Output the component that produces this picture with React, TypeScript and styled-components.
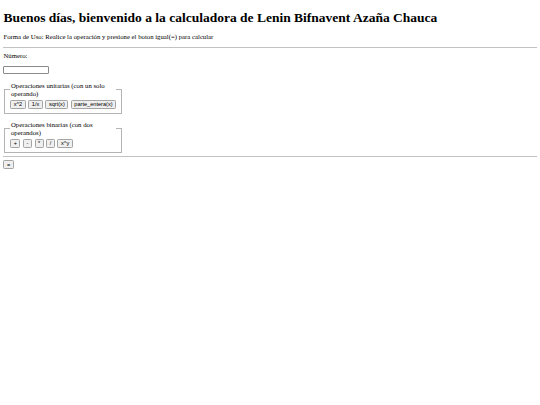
import styled, { createGlobalStyle } from "styled-components";

const GlobalStyle = createGlobalStyle`
  html, body {
    background: #ffffff;
  }
  body {
    margin: 3.4px;
    font-family: "Liberation Serif", "Times New Roman", serif;
    font-size: 6.75px;
    line-height: 1.15;
    color: #000000;
  }
`;

const Title = styled.h1`
  font-size: 13.5px;
  font-weight: bold;
  margin: 7px 0 7.5px;
`;

const Usage = styled.p`
  margin: 6px 0;
`;

const Rule = styled.hr`
  margin: 3.4px 0;
  border: none;
  border-top: 1px solid #c2c2c2;
  height: 0;
`;

const Label = styled.div`
  margin-top: 2.6px;
`;

const NumberInput = styled.input`
  display: block;
  box-sizing: border-box;
  width: 46px;
  height: 8px;
  padding: 0.4px 0.8px;
  margin: 6.5px 0 8px;
  border: 1px solid #8a8a8a;
  border-radius: 1px;
  font-size: 5.6px;
  font-family: "Liberation Sans", Arial, sans-serif;
`;

const Group = styled.fieldset<{ $last?: boolean }>`
  width: 106px;
  margin: 0 0.8px ${(p) => (p.$last ? "1.8px" : "7.4px")};
  padding: 1.2px 5px 4px;
  border: 1px solid #b4b4b4;
  min-width: 0;
`;

const Caption = styled.legend`
  padding: 0 0.8px;
  font-size: 6.75px;
  line-height: 1.15;
`;

const ButtonRow = styled.div`
  display: flex;
  gap: 2.6px;
  padding-top: 1.3px;
`;

const OpButton = styled.button`
  font-family: "Liberation Sans", Arial, sans-serif;
  font-size: 5.6px;
  line-height: 1.1;
  padding: 0.3px 2.5px;
  background: #efefef;
  border: 1px solid #a4a4a4;
  border-radius: 1.3px;
  color: #000000;
`;

const EqualsButton = styled(OpButton)`
  display: block;
`;

export default function App() {
  const unary = ["x^2", "1/x", "sqrt(x)", "parte_entera(x)"];
  const binary = ["+", "-", "*", "/", "x^y"];
  return (
    <>
      <GlobalStyle />
      <Title>Buenos días, bienvenido a la calculadora de Lenin Bifnavent Azaña Chauca</Title>
      <Usage>Forma de Uso: Realice la operación y presione el boton igual(=) para calcular</Usage>
      <Rule />
      <Label>Número:</Label>
      <NumberInput type="text" />
      <Group>
        <Caption>Operaciones unitarias (con un solo operando)</Caption>
        <ButtonRow>
          {unary.map((op) => (
            <OpButton key={op}>{op}</OpButton>
          ))}
        </ButtonRow>
      </Group>
      <Group $last>
        <Caption>Operaciones binarias (con dos operandos)</Caption>
        <ButtonRow>
          {binary.map((op) => (
            <OpButton key={op}>{op}</OpButton>
          ))}
        </ButtonRow>
      </Group>
      <Rule />
      <EqualsButton>=</EqualsButton>
    </>
  );
}
